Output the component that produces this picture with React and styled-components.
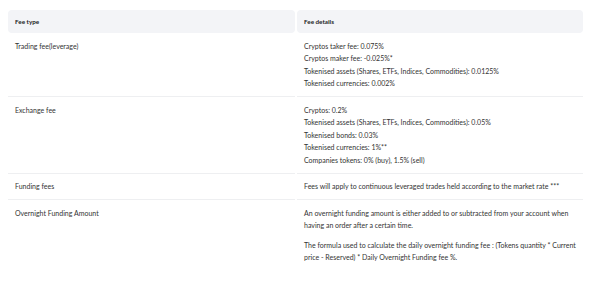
import React from "react";
import styled, { createGlobalStyle } from "styled-components";

const Global = createGlobalStyle`
  html, body { margin: 0; padding: 0; background: #fff; }
  body { font-family: Lato, "Open Sans", sans-serif; color: #333; }
`;

const Page = styled.div`
  padding: 10px 0 0 8px;
`;

const Table = styled.div`
  width: 575px;
  display: grid;
  grid-template-columns: 287px 286px;
  column-gap: 2px;
`;

const HeadCell = styled.div`
  background: #f3f4f7;
  border-radius: 4px;
  height: 23px;
  display: flex;
  align-items: center;
  padding: 0 7px;
  font-size: 6.3px;
  font-weight: 700;
  color: #222;
`;

const Cell = styled.div`
  padding: 6.5px 7px;
  font-size: 7px;
  line-height: 12.5px;
  color: #333;
  border-bottom: ${(p) => (p.$last ? "none" : "1px solid #eeeff1")};
`;

const Line = styled.div`
  white-space: nowrap;
`;

const Para = styled.p`
  margin: 0;
  & + & { margin-top: 7px; }
`;

const rows = [
  {
    type: "Trading fee(leverage)",
    lines: [
      "Cryptos taker fee: 0.075%",
      "Cryptos maker fee: -0.025%*",
      "Tokenised assets (Shares, ETFs, Indices, Commodities): 0.0125%",
      "Tokenised currencies: 0.002%",
    ],
  },
  {
    type: "Exchange fee",
    lines: [
      "Cryptos: 0.2%",
      "Tokenised assets (Shares, ETFs, Indices, Commodities): 0.05%",
      "Tokenised bonds: 0.03%",
      "Tokenised currencies: 1%**",
      "Companies tokens: 0% (buy), 1.5% (sell)",
    ],
  },
  {
    type: "Funding fees",
    lines: [
      "Fees will apply to continuous leveraged trades held according to the market rate ***",
    ],
  },
];

export default function App() {
  return (
    <Page>
      <Global />
      <Table>
        <HeadCell>Fee type</HeadCell>
        <HeadCell>Fee details</HeadCell>
        {rows.map((r) => (
          <React.Fragment key={r.type}>
            <Cell>{r.type}</Cell>
            <Cell>
              {r.lines.map((l) => (
                <Line key={l}>{l}</Line>
              ))}
            </Cell>
          </React.Fragment>
        ))}
        <Cell $last>Overnight Funding Amount</Cell>
        <Cell $last>
          <Para>
            An overnight funding amount is either added to or subtracted from your account when having an order after a certain time.
          </Para>
          <Para>
            The formula used to calculate the daily overnight funding fee : (Tokens quantity * Current price - Reserved) * Daily Overnight Funding fee %.
          </Para>
        </Cell>
      </Table>
    </Page>
  );
}
